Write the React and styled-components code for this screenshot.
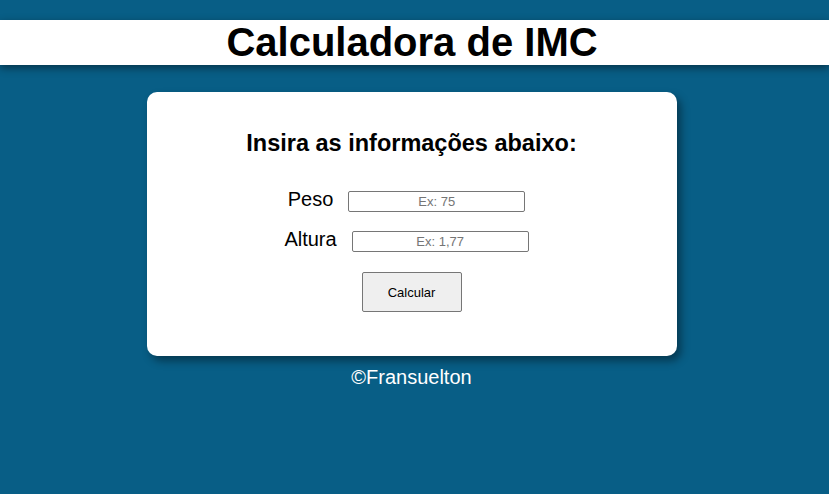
import React, { useState } from 'react';
import styled, { createGlobalStyle } from 'styled-components';

const GlobalStyle = createGlobalStyle`
  html, body {
    margin: 0;
    padding: 0;
    background-color: #085e86;
    font-family: "Liberation Sans", Arial, sans-serif;
  }
`;

const Page = styled.div`
  min-height: 494px;
  padding-top: 20px;
  display: flex;
  flex-direction: column;
  align-items: center;
`;

const Title = styled.h1`
  width: 100%;
  margin: 0;
  height: 45px;
  line-height: 45px;
  padding-right: 5px;
  box-sizing: border-box;
  background: #fff;
  color: #000;
  font-size: 40px;
  font-weight: bold;
  text-align: center;
  box-shadow: 0 3px 8px rgba(0, 0, 0, 0.45);
`;

const Card = styled.div`
  width: 530px;
  height: 264px;
  margin: 27px 6px 0 0;
  background: #fff;
  border-radius: 10px;
  box-shadow: 4px 5px 8px rgba(0, 0, 0, 0.4);
  display: flex;
  flex-direction: column;
  align-items: center;
  box-sizing: border-box;
  padding-top: 38px;
`;

const Subtitle = styled.h2`
  margin: 0 0 33px;
  font-size: 23.5px;
  font-weight: bold;
  color: #000;
`;

const Row = styled.div`
  display: flex;
  align-items: center;
  gap: ${(p) => p.gap}px;
  margin-left: -10px;
  margin-bottom: ${(p) => p.spacing}px;
`;

const Label = styled.label`
  font-size: 20px;
  color: #000;
  position: relative;
  top: -2px;
`;

const Input = styled.input`
  width: 171px;
  height: 17px;
  padding: 1px 2px;
  border: 1px solid #767676;
  border-radius: 2px;
  font-family: "Liberation Sans", Arial, sans-serif;
  font-size: 13px;
  text-align: center;
  color: #000;
  &::placeholder {
    color: #757575;
  }
`;

const Button = styled.button`
  width: 100px;
  height: 40px;
  background: #efefef;
  border: 1px solid #767676;
  border-radius: 2px;
  font-family: "Liberation Sans", Arial, sans-serif;
  font-size: 13px;
  color: #000;
`;

const Footer = styled.p`
  margin: 10px 6px 0 0;
  font-size: 20px;
  color: #fff;
`;

export default function App() {
  const [peso, setPeso] = useState('');
  const [altura, setAltura] = useState('');

  return (
    <>
      <GlobalStyle />
      <Page>
        <Title>Calculadora de IMC</Title>
        <Card>
          <Subtitle>Insira as informações abaixo:</Subtitle>
          <Row gap={15} spacing={17}>
            <Label htmlFor="peso">Peso</Label>
            <Input id="peso" placeholder="Ex: 75" value={peso} onChange={(e) => setPeso(e.target.value)} />
          </Row>
          <Row gap={15} spacing={19}>
            <Label htmlFor="altura">Altura</Label>
            <Input id="altura" placeholder="Ex: 1,77" value={altura} onChange={(e) => setAltura(e.target.value)} />
          </Row>
          <Button>Calcular</Button>
        </Card>
        <Footer>©Fransuelton</Footer>
      </Page>
    </>
  );
}
